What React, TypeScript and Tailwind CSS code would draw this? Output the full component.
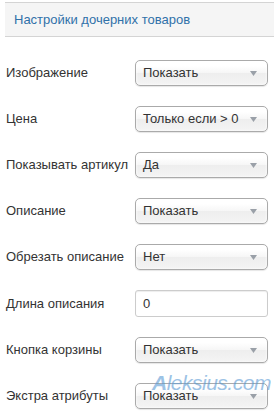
import React from "react";

const rows: { label: string; value: string; type: "select" | "input" }[] = [
  { label: "Изображение", value: "Показать", type: "select" },
  { label: "Цена", value: "Только если > 0", type: "select" },
  { label: "Показывать артикул", value: "Да", type: "select" },
  { label: "Описание", value: "Показать", type: "select" },
  { label: "Обрезать описание", value: "Нет", type: "select" },
  { label: "Длина описания", value: "0", type: "input" },
  { label: "Кнопка корзины", value: "Показать", type: "select" },
  { label: "Экстра атрибуты", value: "Показать", type: "select" },
];

function Select({ value }: { value: string }) {
  return (
    <div className="relative flex h-[26px] w-[133px] items-center rounded-[5px] border border-[#aaa] bg-[linear-gradient(#ffffff_20%,#f6f6f6_50%,#eeeeee_52%,#f4f4f4_100%)] pl-[7px] shadow-[inset_0_0_3px_#fff,0_1px_1px_rgba(0,0,0,0.1)]">
      <span className="text-[13px] text-[#333]">{value}</span>
      <svg className="absolute right-[10px] top-[10px]" width="7" height="5" viewBox="0 0 7 5">
        <polygon points="0,0 7,0 3.5,5" fill="#9aa0a8" />
      </svg>
    </div>
  );
}

function Input({ value }: { value: string }) {
  return (
    <div className="flex h-[27px] w-[133px] items-center rounded-[3px] border border-[#ccc] bg-white pl-[7px] shadow-[inset_0_1px_1px_rgba(0,0,0,0.075)]">
      <span className="text-[13px] text-[#333]">{value}</span>
    </div>
  );
}

export default function App() {
  return (
    <div
      className="relative h-[413px] w-[274px] overflow-hidden bg-white"
      style={{ fontFamily: '"Liberation Sans", Arial, sans-serif' }}
    >
      <div className="ml-[5px] mt-[2px] flex h-[35px] items-center border-y border-[#d4d4d4] bg-[#f5f5f5] pl-[9px]">
        <span className="text-[13px] text-[#3071a9]">Настройки дочерних товаров</span>
      </div>
      <div className="mt-[23px] flex flex-col gap-[20px]">
        {rows.map((r) => (
          <div key={r.label} className="flex items-center">
            <div className="w-[135px] pl-[6px] text-[13px] text-[#333]">{r.label}</div>
            {r.type === "select" ? <Select value={r.value} /> : <Input value={r.value} />}
          </div>
        ))}
      </div>
      <div className="pointer-events-none absolute left-[152px] top-[367px] text-[21px] italic tracking-[-0.5px] text-[#5b9bd5] opacity-60">
        <span className="font-bold">A</span>leksius.com
      </div>
    </div>
  );
}
